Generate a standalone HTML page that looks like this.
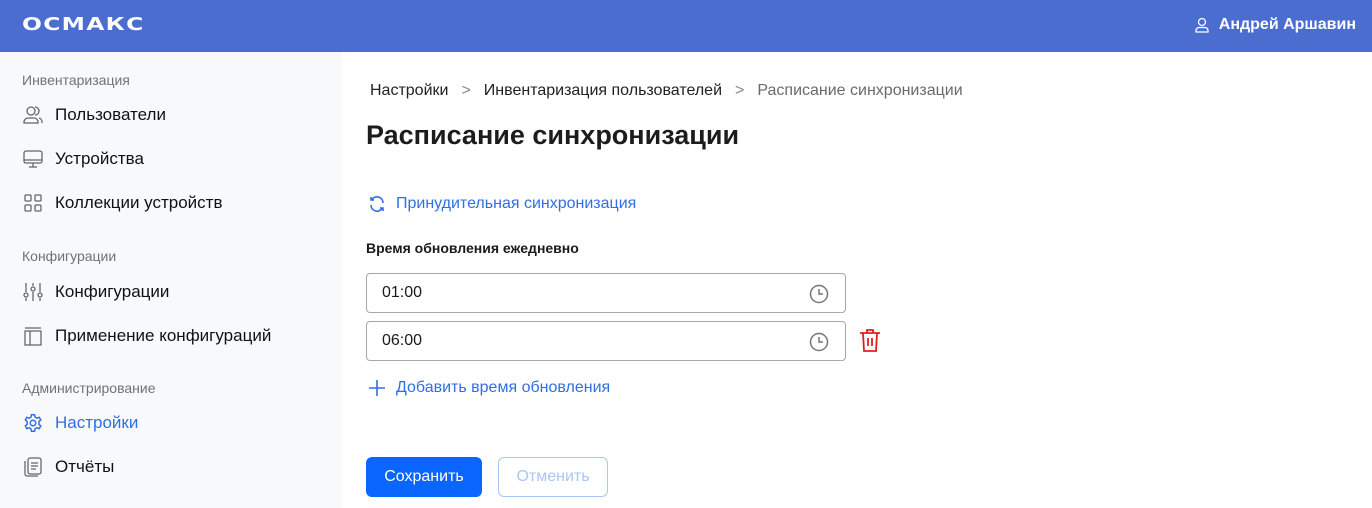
<!DOCTYPE html>
<html><head><meta charset="utf-8"><style>
*{box-sizing:border-box;margin:0;padding:0}
body{width:1372px;height:508px;overflow:hidden;font-family:"Liberation Sans",sans-serif;background:#fff;position:relative;color:#1a1a1a}
.hdr{position:absolute;left:0;top:0;width:1372px;height:52px;background:#4a6dcf}
.logo{position:absolute;left:22px;top:14px;color:#fff;font-weight:900;font-size:18px;letter-spacing:1px;transform:scaleX(1.3);transform-origin:left;font-family:"DejaVu Sans",sans-serif}
.user{position:absolute;right:16px;top:16px;color:#fff;font-weight:bold;font-size:16px;display:flex;align-items:center;gap:10px}
.side{position:absolute;left:0;top:52px;width:342px;height:456px;background:#f8f9fb}
.sec{position:absolute;left:22px;font-size:14px;color:#6f7278}
.it{position:absolute;left:22px;display:flex;align-items:center;gap:11px;font-size:17px;color:#111}
.it svg{width:22px;height:22px}
.main{position:absolute;left:342px;top:52px}
.bc{position:absolute;left:28px;top:30px;font-size:16px;white-space:nowrap;color:#222}
.bc span.g{color:#6a6a6a}
.bc .s{color:#888;margin:0 13px}
h1{position:absolute;left:24px;top:68px;font-size:27px;font-weight:bold;white-space:nowrap;color:#1c1c1c}
.link{position:absolute;left:26px;display:flex;align-items:center;gap:10px;color:#2f6ee6;font-size:16px;white-space:nowrap}
.lbl{position:absolute;left:24px;top:188px;font-size:14px;font-weight:bold;white-space:nowrap}
.inp{position:absolute;left:24px;width:480px;height:40px;border:1px solid #a8a8a8;border-radius:4px;font-size:16px;padding:10px 15px}
.inp svg{position:absolute;right:16px;top:10px}
.btn{position:absolute;top:405px;height:40px;border-radius:6px;font-size:16px;display:flex;align-items:center;justify-content:center}
</style></head><body>
<div class="hdr"><div class="logo">ОСМАКС</div>
<div class="user"><svg width="14" height="16" viewBox="0 0 14 16" fill="none" stroke="#fff" stroke-width="1.3"><circle cx="7" cy="5" r="3.5"/><path d="M1 15v-1.5a3 3 0 0 1 3-3h6a3 3 0 0 1 3 3V15z"/></svg>Андрей Аршавин</div></div>
<div class="side">
<div class="sec" style="top:20px">Инвентаризация</div>
<div class="it" style="top:52px"><svg viewBox="0 0 22 22" fill="none" stroke="#666" stroke-width="1.3"><circle cx="9" cy="7" r="4"/><path d="M2 19v-1a4 4 0 0 1 4-4h6a4 4 0 0 1 4 4v1z"/><path d="M13 3a4 4 0 0 1 0 8M17 14a4 4 0 0 1 3 4v1"/></svg>Пользователи</div>
<div class="it" style="top:96px"><svg viewBox="0 0 22 22" fill="none" stroke="#666" stroke-width="1.3"><rect x="2" y="3" width="18" height="12" rx="2"/><path d="M2 12h18M11 15v4M7 19h8"/></svg>Устройства</div>
<div class="it" style="top:140px"><svg viewBox="0 0 22 22" fill="none" stroke="#666" stroke-width="1.3"><rect x="3" y="3" width="6" height="6" rx="1"/><rect x="13" y="3" width="6" height="6" rx="1"/><rect x="3" y="13" width="6" height="6" rx="1"/><rect x="13" y="13" width="6" height="6" rx="1"/></svg>Коллекции устройств</div>
<div class="sec" style="top:196px">Конфигурации</div>
<div class="it" style="top:229px"><svg viewBox="0 0 22 22" fill="none" stroke="#666" stroke-width="1.3"><path d="M4 2v9M4 17v3M11 2v3M11 11v9M18 2v9M18 17v3"/><circle cx="4" cy="14" r="2"/><circle cx="11" cy="8" r="2"/><circle cx="18" cy="14" r="2"/></svg>Конфигурации</div>
<div class="it" style="top:273px"><svg viewBox="0 0 22 22" fill="none" stroke="#666" stroke-width="1.3"><path d="M3 3h16M3 6h16v14H3z M8 6v14"/></svg>Применение конфигураций</div>
<div class="sec" style="top:328px">Администрирование</div>
<div class="it" style="top:360px;color:#2f6ee6"><svg viewBox="0 0 24 24" fill="none" stroke="#2f6ee6" stroke-width="1.6"><circle cx="12" cy="12" r="3"/><path d="M10.3 3h3.4l.6 2.6 2 1.1 2.5-.9 1.7 2.9-2 1.8v2.9l2 1.8-1.7 2.9-2.5-.9-2 1.1-.6 2.7h-3.4l-.6-2.7-2-1.1-2.5.9L3.6 15.2l2-1.8v-2.9l-2-1.8 1.7-2.9 2.5.9 2-1.1z"/></svg>Настройки</div>
<div class="it" style="top:404px"><svg viewBox="0 0 22 22" fill="none" stroke="#666" stroke-width="1.3"><rect x="6" y="2" width="13" height="16" rx="2"/><path d="M3 5v13a2 2 0 0 0 2 2h11M9 7h7M9 10h7M9 13h5"/></svg>Отчёты</div>
</div>
<div class="main">
<div class="bc">Настройки<span class="s">&gt;</span>Инвентаризация пользователей<span class="s">&gt;</span><span class="g">Расписание синхронизации</span></div>
<h1>Расписание синхронизации</h1>
<div class="link" style="top:143px"><svg width="18" height="18" viewBox="0 0 18 18" fill="none" stroke="#2f6ee6" stroke-width="1.6"><path d="M15 8A6 6 0 0 0 4 4.5M3 10a6 6 0 0 0 11 3.5"/><path d="M3 2v3h3M15 16v-3h-3"/></svg>Принудительная синхронизация</div>
<div class="lbl">Время обновления ежедневно</div>
<div class="inp" style="top:221px">01:00<svg width="20" height="20" viewBox="0 0 20 20" fill="none" stroke="#777" stroke-width="1.5"><circle cx="10" cy="10" r="8.5"/><path d="M10 5v5h4"/></svg></div>
<div class="inp" style="top:269px">06:00<svg width="20" height="20" viewBox="0 0 20 20" fill="none" stroke="#777" stroke-width="1.5"><circle cx="10" cy="10" r="8.5"/><path d="M10 5v5h4"/></svg></div>
<svg style="position:absolute;left:516px;top:276px" width="24" height="26" viewBox="0 0 24 26" fill="none" stroke="#e02020" stroke-width="1.8"><path d="M2 5h20M9 5V2h6v3M5 5l1 18h12l1-18M10 10v8M14 10v8"/></svg>
<div class="link" style="top:327px"><svg width="18" height="18" viewBox="0 0 18 18" stroke="#2f6ee6" stroke-width="1.6"><path d="M9 1v16M1 9h16"/></svg>Добавить время обновления</div>
<div class="btn" style="left:24px;width:116px;background:#0a66ff;color:#fff">Сохранить</div>
<div class="btn" style="left:156px;width:110px;border:1px solid #a9c6f7;color:#a9c6f7">Отменить</div>
</div>
</body></html>
